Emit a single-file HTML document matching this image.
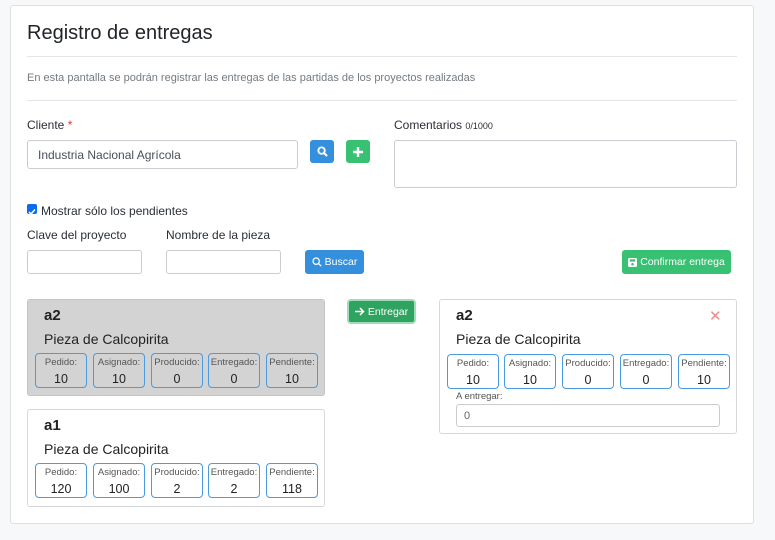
<!DOCTYPE html>
<html><head><meta charset="utf-8">
<style>
*{box-sizing:border-box;margin:0;padding:0}
body{width:775px;height:540px;background:#f7f8fa;font-family:"Liberation Sans",sans-serif;color:#222;position:relative;overflow:hidden}
.a{position:absolute}
.card{left:10px;top:5px;width:744px;height:519px;background:#fff;border:1px solid #dcdfe3;border-radius:3px}
.hr{height:1px;background:#e3e5e8;left:27px;width:710px}
.lbl{font-size:12px;color:#2a2f35}
.inp{border:1px solid #c9cdd2;border-radius:3px;background:#fff}
.btn{border-radius:3px;color:#fff;font-size:10.5px;display:flex;align-items:center;justify-content:center;gap:3px}
.blue{background:#3490dc}
.green{background:#38c172}
.pc{border:1px solid #d6d8db;border-radius:3px}
.code{font-weight:bold;font-size:15px;color:#222}
.name{font-size:14px;color:#222}
.st{width:52px;height:35px;border:1px solid #4a9be0;border-radius:4px;text-align:center;font-size:9.5px;color:#555;padding-top:3px}
.st b{display:block;font-weight:normal;font-size:12.5px;color:#222;margin-top:4px}
</style></head><body>
<div class="a card"></div>
<div class="a" style="left:27px;top:22px;font-size:20px;color:#212529">Registro de entregas</div>
<div class="a hr" style="top:56px"></div>
<div class="a" style="left:27px;top:72px;font-size:11px;color:#737b83">En esta pantalla se podrán registrar las entregas de las partidas de los proyectos realizadas</div>
<div class="a hr" style="top:100px"></div>

<div class="a lbl" style="left:27px;top:118px">Cliente <span style="color:#e3342f">*</span></div>
<div class="a inp" style="left:27px;top:140px;width:271px;height:29px;font-size:12px;color:#495057;padding:7px 10px">Industria Nacional Agrícola</div>
<div class="a btn blue" style="left:310px;top:140px;width:24px;height:23px"><svg width="11" height="11" viewBox="0 0 12 12"><circle cx="5" cy="5" r="3.5" fill="none" stroke="#fff" stroke-width="2"/><path d="M7.5 7.5L11 11" stroke="#fff" stroke-width="2.2"/></svg></div>
<div class="a btn green" style="left:346px;top:140px;width:24px;height:23px"><svg width="10" height="10" viewBox="0 0 10 10"><path d="M5 0v10M0 5h10" stroke="#fff" stroke-width="2.4"/></svg></div>
<div class="a lbl" style="left:394px;top:118px">Comentarios <span style="font-size:9px">0/1000</span></div>
<div class="a inp" style="left:394px;top:140px;width:343px;height:48px"></div>

<div class="a" style="left:27px;top:204px;width:10px;height:10px;background:#0b6bf0;border-radius:2px"><svg width="10" height="10" viewBox="0 0 10 10"><path d="M2 5l2 2 4-4.5" fill="none" stroke="#fff" stroke-width="1.6"/></svg></div>
<div class="a lbl" style="left:41px;top:204px">Mostrar sólo los pendientes</div>
<div class="a lbl" style="left:27px;top:228px">Clave del proyecto</div>
<div class="a lbl" style="left:166px;top:228px">Nombre de la pieza</div>
<div class="a inp" style="left:27px;top:250px;width:115px;height:24px"></div>
<div class="a inp" style="left:166px;top:250px;width:115px;height:24px"></div>
<div class="a btn blue" style="left:305px;top:250px;width:59px;height:24px"><svg width="10" height="10" viewBox="0 0 12 12"><circle cx="5" cy="5" r="3.8" fill="none" stroke="#fff" stroke-width="1.5"/><path d="M7.8 7.8L11 11" stroke="#fff" stroke-width="1.6"/></svg>Buscar</div>
<div class="a btn green" style="left:622px;top:250px;width:109px;height:24px"><svg width="9" height="9" viewBox="0 0 10 10"><rect x="0" y="0" width="10" height="10" rx="1.5" fill="#fff"/><rect x="2" y="1.5" width="6" height="2.5" fill="#38c172"/><circle cx="5" cy="7" r="1.4" fill="#38c172"/></svg>Confirmar entrega</div>

<div class="a btn" style="left:347px;top:299px;width:69px;height:25px;background:#2fa360;border:2px solid #9fdcb8;border-radius:4px"><svg width="10" height="9" viewBox="0 0 10 9"><path d="M0 4.5h8.5M5 1l3.5 3.5L5 8" fill="none" stroke="#fff" stroke-width="1.5"/></svg>Entregar</div>

<div class="a pc" style="left:27px;top:299px;width:298px;height:97px;background:#d3d3d3;border-color:#c4c4c4"></div>
<div class="a code" style="left:44px;top:307px">a2</div>
<div class="a name" style="left:44px;top:331px">Pieza de Calcopirita</div>
<div class="a st" style="left:35px;top:353px">Pedido:<b>10</b></div>
<div class="a st" style="left:93px;top:353px">Asignado:<b>10</b></div>
<div class="a st" style="left:151px;top:353px">Producido:<b>0</b></div>
<div class="a st" style="left:208px;top:353px">Entregado:<b>0</b></div>
<div class="a st" style="left:266px;top:353px">Pendiente:<b>10</b></div>

<div class="a pc" style="left:27px;top:409px;width:298px;height:98px;background:#fff"></div>
<div class="a code" style="left:44px;top:417px">a1</div>
<div class="a name" style="left:44px;top:441px">Pieza de Calcopirita</div>
<div class="a st" style="left:35px;top:463px">Pedido:<b>120</b></div>
<div class="a st" style="left:93px;top:463px">Asignado:<b>100</b></div>
<div class="a st" style="left:151px;top:463px">Producido:<b>2</b></div>
<div class="a st" style="left:208px;top:463px">Entregado:<b>2</b></div>
<div class="a st" style="left:266px;top:463px">Pendiente:<b>118</b></div>

<div class="a pc" style="left:439px;top:299px;width:298px;height:135px;background:#fff"></div>
<div class="a code" style="left:456px;top:307px">a2</div>
<div class="a" style="left:709px;top:307px;font-size:15px;color:#ef8a8a">✕</div>
<div class="a name" style="left:456px;top:331px">Pieza de Calcopirita</div>
<div class="a st" style="left:447px;top:354px">Pedido:<b>10</b></div>
<div class="a st" style="left:504px;top:354px">Asignado:<b>10</b></div>
<div class="a st" style="left:562px;top:354px">Producido:<b>0</b></div>
<div class="a st" style="left:620px;top:354px">Entregado:<b>0</b></div>
<div class="a st" style="left:678px;top:354px">Pendiente:<b>10</b></div>
<div class="a" style="left:456px;top:391px;font-size:9.5px;color:#555">A entregar:</div>
<div class="a inp" style="left:456px;top:404px;width:264px;height:23px;font-size:11px;color:#666;padding:5px 7px">0</div>
</body></html>
